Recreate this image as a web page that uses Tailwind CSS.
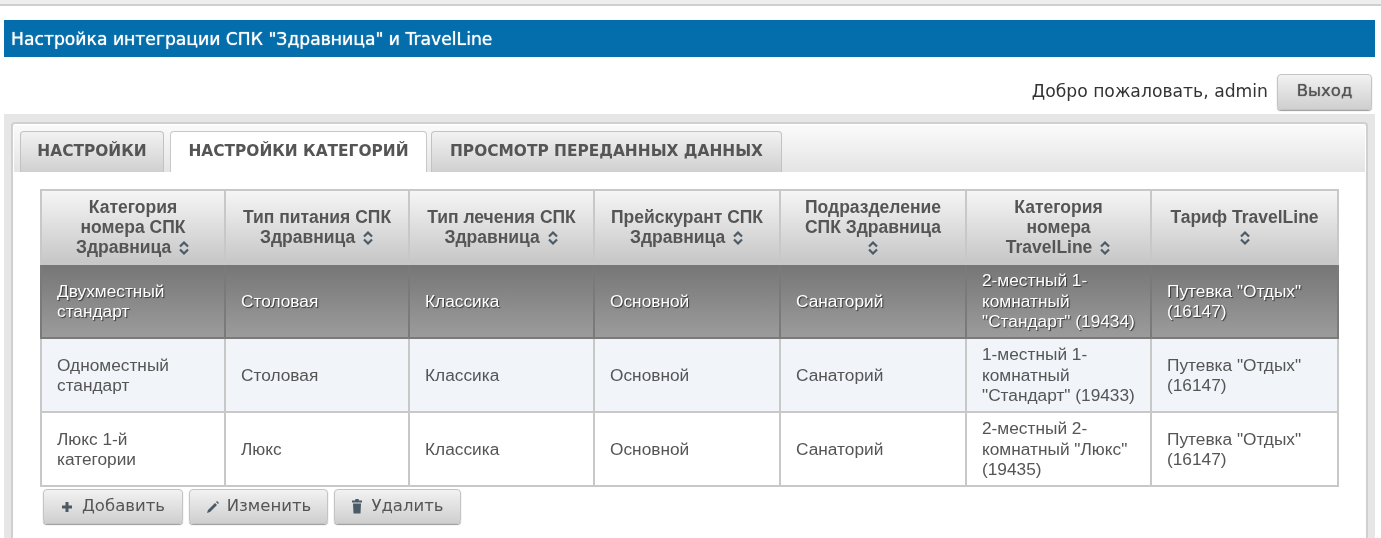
<!DOCTYPE html>
<html lang="en">
<head>
    <meta charset="UTF-8">
    <meta name="viewport" content="width=device-width, initial-scale=1.0">
    <script src="https://cdn.jsdelivr.net/npm/@tailwindcss/browser@4"></script>
    <title>Настройка интеграции</title>
</head>
<body class="bg-white h-[538px] w-[1381px] overflow-hidden [font-family:'Liberation_Sans',sans-serif] text-[#555] blur-[0.6px]">
    <div class="h-[6px] bg-[#eeeeee] border-b-2 border-[#cfcfcf]"></div>

    <div class="mx-[4px] mt-[14px] h-[37px] w-[1371px] bg-[#046dab] flex items-center pl-[7px] pt-[2px] text-white text-[17.2px] [font-family:'DejaVu_Sans',sans-serif] [text-shadow:0_0_1px_#fff]">
        Настройка интеграции СПК "Здравница" и TravelLine
    </div>

    <div class="h-[57px] flex items-center justify-end pr-[9px] pt-[12px] gap-[9px]">
        <span class="text-[17.2px] text-[#333] [font-family:'DejaVu_Sans',sans-serif]">Добро пожаловать, admin</span>
        <button class="h-[36px] w-[95px] rounded-[4px] border border-[#c4c4c4] bg-gradient-to-b from-[#f2f2f2] to-[#cfcfcf] shadow-[0_1px_1px_#999] text-[16.5px] text-[#555] [font-family:'DejaVu_Sans',sans-serif] [text-shadow:0_0_1px_#555]">Выход</button>
    </div>

    <div class="mx-[4px] w-[1371px] h-[424px] bg-[#e6e6e6] pt-[8px] px-[7px]">
        <div class="bg-white h-full rounded-t-[4px] border-t-2 border-x-2 border-[#d0d0d0] pt-[1px] px-[1px]">
            <div class="h-[47px] pl-[6px] flex items-end [font-family:'DejaVu_Sans',sans-serif] font-bold text-[15.4px] text-[#555] bg-gradient-to-b from-[#fbfbfb] to-[#e4e4e4]">
                <div class="h-[41px] w-[144px] flex items-center justify-center rounded-t-[4px] border border-b-0 border-[#c2c2c2] bg-gradient-to-b from-[#f2f2f2] to-[#d0d0d0]">НАСТРОЙКИ</div>
                <div class="ml-[6px] h-[41px] w-[257px] flex items-center justify-center rounded-t-[4px] border border-b-0 border-[#c8c8c8] bg-white">НАСТРОЙКИ КАТЕГОРИЙ</div>
                <div class="ml-[4px] h-[41px] w-[351px] flex items-center justify-center rounded-t-[4px] border border-b-0 border-[#c2c2c2] bg-gradient-to-b from-[#f2f2f2] to-[#d0d0d0]">ПРОСМОТР ПЕРЕДАННЫХ ДАННЫХ</div>
            </div>

            <div class="pl-[26px] pt-[17px]">
                <table class="table-fixed border-collapse w-[1297px] text-[17.3px] leading-[20.5px]">
                    <colgroup>
                        <col class="w-[184px]"><col class="w-[184px]"><col class="w-[185px]"><col class="w-[186px]"><col class="w-[186px]"><col class="w-[185px]"><col class="w-[187px]">
                    </colgroup>
                    <thead class="font-bold text-[17.5px] leading-[20px] text-[#555]">
                        <tr class="h-[74px] bg-gradient-to-b from-[#f6f6f6] to-[#c6c6c6]">
                            <th class="border-2 border-[#c8c8c8] px-[6px]">Категория<br>номера СПК<br>Здравница <svg class="inline w-[12px] h-[16px] ml-[2px] align-[-3px]" viewBox="0 0 12 16" fill="none" stroke="#4a5a66" stroke-width="2.2"><path d="M2 6.500 6 2.500l4 4M2 9.500l4 4 4-4"/></svg></th>
                            <th class="border-2 border-[#c8c8c8] px-[6px]">Тип питания СПК<br>Здравница <svg class="inline w-[12px] h-[16px] ml-[2px] align-[-3px]" viewBox="0 0 12 16" fill="none" stroke="#4a5a66" stroke-width="2.2"><path d="M2 6.500 6 2.500l4 4M2 9.500l4 4 4-4"/></svg></th>
                            <th class="border-2 border-[#c8c8c8] px-[6px]">Тип лечения СПК<br>Здравница <svg class="inline w-[12px] h-[16px] ml-[2px] align-[-3px]" viewBox="0 0 12 16" fill="none" stroke="#4a5a66" stroke-width="2.2"><path d="M2 6.500 6 2.500l4 4M2 9.500l4 4 4-4"/></svg></th>
                            <th class="border-2 border-[#c8c8c8] px-[6px]">Прейскурант СПК<br>Здравница <svg class="inline w-[12px] h-[16px] ml-[2px] align-[-3px]" viewBox="0 0 12 16" fill="none" stroke="#4a5a66" stroke-width="2.2"><path d="M2 6.500 6 2.500l4 4M2 9.500l4 4 4-4"/></svg></th>
                            <th class="border-2 border-[#c8c8c8] px-[6px]">Подразделение<br>СПК Здравница<br><svg class="inline w-[12px] h-[16px] align-[-3px]" viewBox="0 0 12 16" fill="none" stroke="#4a5a66" stroke-width="2.2"><path d="M2 6.500 6 2.500l4 4M2 9.500l4 4 4-4"/></svg></th>
                            <th class="border-2 border-[#c8c8c8] px-[6px]">Категория<br>номера<br>TravelLine <svg class="inline w-[12px] h-[16px] ml-[2px] align-[-3px]" viewBox="0 0 12 16" fill="none" stroke="#4a5a66" stroke-width="2.2"><path d="M2 6.500 6 2.500l4 4M2 9.500l4 4 4-4"/></svg></th>
                            <th class="border-2 border-[#c8c8c8] px-[6px]">Тариф TravelLine<br><svg class="inline w-[12px] h-[16px] align-[-3px]" viewBox="0 0 12 16" fill="none" stroke="#4a5a66" stroke-width="2.2"><path d="M2 6.500 6 2.500l4 4M2 9.500l4 4 4-4"/></svg></th>
                        </tr>
                    </thead>
                    <tbody>
                        <tr class="h-[74px] bg-gradient-to-b from-[#767676] to-[#9c9c9c] text-white [text-shadow:1px_1px_1px_#333]">
                            <td class="border-2 border-[#7a7a7a] pl-[15px] pr-[6px]">Двухместный<br>стандарт</td>
                            <td class="border-2 border-[#7a7a7a] pl-[15px] pr-[6px]">Столовая</td>
                            <td class="border-2 border-[#7a7a7a] pl-[15px] pr-[6px]">Классика</td>
                            <td class="border-2 border-[#7a7a7a] pl-[15px] pr-[6px]">Основной</td>
                            <td class="border-2 border-[#7a7a7a] pl-[15px] pr-[6px]">Санаторий</td>
                            <td class="border-2 border-[#7a7a7a] pl-[15px] pr-[6px]">2-местный 1-<br>комнатный<br>"Стандарт" (19434)</td>
                            <td class="border-2 border-[#7a7a7a] pl-[15px] pr-[6px]">Путевка "Отдых"<br>(16147)</td>
                        </tr>
                        <tr class="h-[74px] bg-[#f1f5fa]">
                            <td class="border-2 border-[#c8c8c8] pl-[15px] pr-[6px]">Одноместный<br>стандарт</td>
                            <td class="border-2 border-[#c8c8c8] pl-[15px] pr-[6px]">Столовая</td>
                            <td class="border-2 border-[#c8c8c8] pl-[15px] pr-[6px]">Классика</td>
                            <td class="border-2 border-[#c8c8c8] pl-[15px] pr-[6px]">Основной</td>
                            <td class="border-2 border-[#c8c8c8] pl-[15px] pr-[6px]">Санаторий</td>
                            <td class="border-2 border-[#c8c8c8] pl-[15px] pr-[6px]">1-местный 1-<br>комнатный<br>"Стандарт" (19433)</td>
                            <td class="border-2 border-[#c8c8c8] pl-[15px] pr-[6px]">Путевка "Отдых"<br>(16147)</td>
                        </tr>
                        <tr class="h-[74px] bg-white">
                            <td class="border-2 border-[#c8c8c8] pl-[15px] pr-[6px]">Люкс 1-й<br>категории</td>
                            <td class="border-2 border-[#c8c8c8] pl-[15px] pr-[6px]">Люкс</td>
                            <td class="border-2 border-[#c8c8c8] pl-[15px] pr-[6px]">Классика</td>
                            <td class="border-2 border-[#c8c8c8] pl-[15px] pr-[6px]">Основной</td>
                            <td class="border-2 border-[#c8c8c8] pl-[15px] pr-[6px]">Санаторий</td>
                            <td class="border-2 border-[#c8c8c8] pl-[15px] pr-[6px]">2-местный 2-<br>комнатный "Люкс"<br>(19435)</td>
                            <td class="border-2 border-[#c8c8c8] pl-[15px] pr-[6px]">Путевка "Отдых"<br>(16147)</td>
                        </tr>
                    </tbody>
                </table>

                <div class="flex gap-[6px] pl-[3px] mt-[2px] [font-family:'DejaVu_Sans',sans-serif] text-[16.5px] text-[#555] [text-shadow:0_0_1px_#555]">
                    <button class="h-[35px] w-[140px] flex items-center justify-center gap-[9px] rounded-[4px] border border-[#c4c4c4] bg-gradient-to-b from-[#f2f2f2] to-[#cfcfcf] shadow-[0_1px_1px_#999]">
                        <svg class="w-[12px] h-[12px]" viewBox="0 0 12 12" fill="#4a5a66"><path d="M4.500 1h3v3.500h3.500v3h-3.500V11h-3V7.500H1v-3h3.500z"/></svg>
                        Добавить
                    </button>
                    <button class="h-[35px] w-[139px] flex items-center justify-center gap-[7px] rounded-[4px] border border-[#c4c4c4] bg-gradient-to-b from-[#f2f2f2] to-[#cfcfcf] shadow-[0_1px_1px_#999]">
                        <svg class="w-[14px] h-[14px]" viewBox="0 0 14 14" fill="#4a5a66"><path d="M1 13l1-3 7-7 2 2-7 7zM10 2l1-1 2 2-1 1z"/></svg>
                        Изменить
                    </button>
                    <button class="h-[35px] w-[127px] flex items-center justify-center gap-[8px] rounded-[4px] border border-[#c4c4c4] bg-gradient-to-b from-[#f2f2f2] to-[#cfcfcf] shadow-[0_1px_1px_#999]">
                        <svg class="w-[12px] h-[15px]" viewBox="0 0 12 15" fill="#4a5a66"><path d="M4.500 0h3l.5 1.500h3V3.500H1V1.500h3zM2 4.500h8L9.500 14.500h-7z"/></svg>
                        Удалить
                    </button>
                </div>
            </div>
        </div>
    </div>
</body>
</html>
